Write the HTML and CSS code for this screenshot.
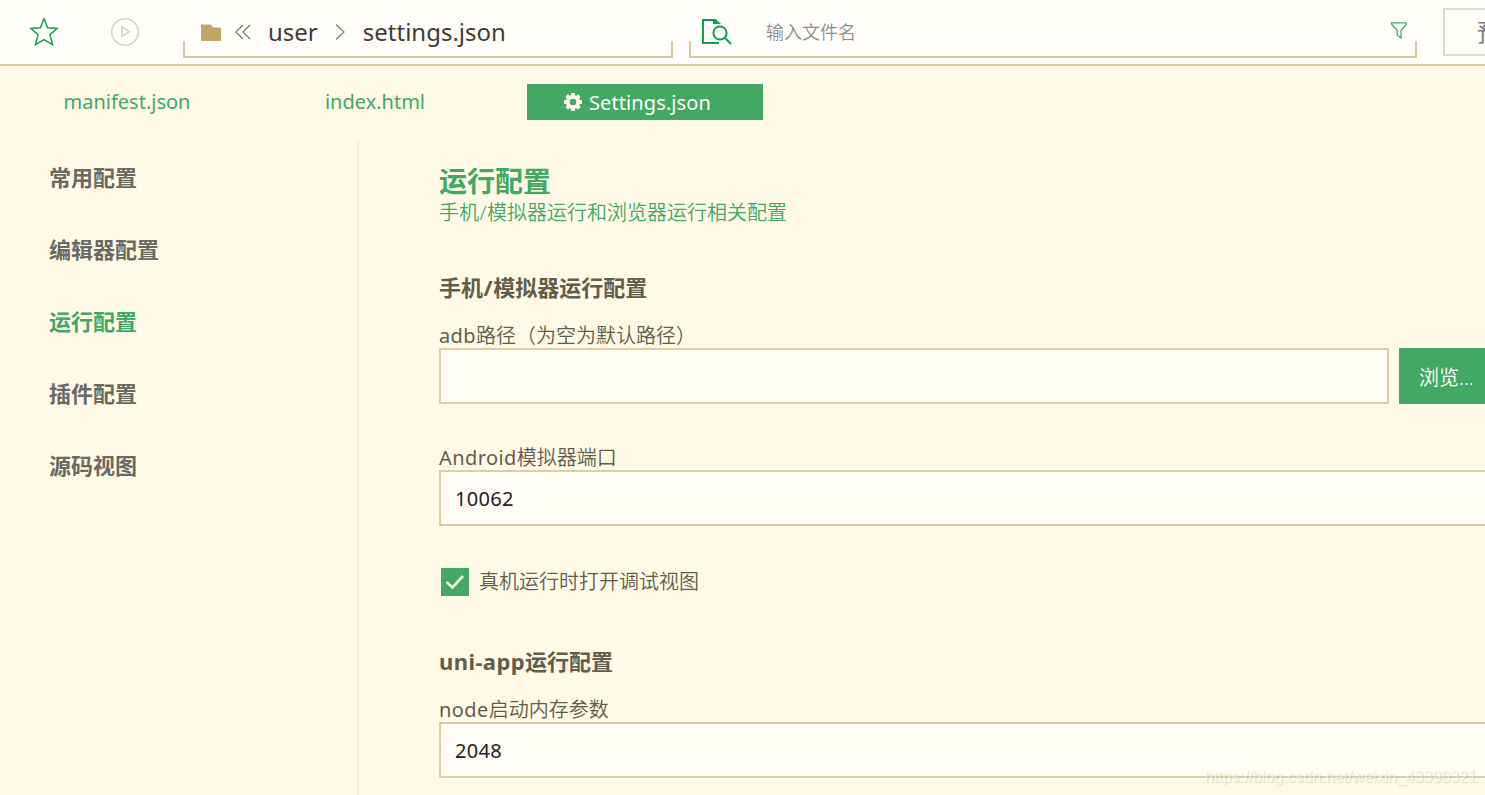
FILE: index.html
```html
<!DOCTYPE html>
<html lang="zh-CN">
<head>
    <meta charset="UTF-8">
    <meta name="viewport" content="width=device-width, initial-scale=1.0">
    <title>Settings.json</title>
    <link rel="stylesheet" href="styles.css">
</head>
<body>
    <div class="toolbar">
        <svg class="icon-star" width="30" height="30" viewBox="0 0 30 30">
            <path d="M15 1.8 L18.6 10.8 L28.2 11.4 L21 17.8 L23.5 27.6 L15 22.6 L6.5 27.6 L9 17.8 L1.8 11.4 L11.4 10.8 Z"/>
        </svg>
        <svg class="icon-play" width="28" height="28" viewBox="0 0 28 28">
            <circle cx="14" cy="14" r="13.2"/>
            <path d="M10.8 9 V18.4 L18.6 13.7 Z"/>
        </svg>
        <div class="bar path-bar">
            <svg class="icon-folder" width="20" height="17" viewBox="0 0 20 17">
                <path d="M0 0.5 H9.5 L12.5 3.5 H20 V17 H0 Z"/>
            </svg>
            <svg class="icon-back" width="16" height="16" viewBox="0 0 16 16">
                <path d="M8 1 L1 8 L8 15 M15 1 L8 8 L15 15"/>
            </svg>
            <span class="crumb">user</span>
            <svg class="icon-next" width="10" height="16" viewBox="0 0 10 16">
                <path d="M1 0.5 L9 8 L1 15.5"/>
            </svg>
            <span class="crumb">settings.json</span>
        </div>
        <div class="bar search-bar">
            <svg class="icon-search" width="30" height="27" viewBox="0 0 30 27">
                <path d="M17 25 H1 V2 H13"/>
                <path class="fold" d="M11 1 H13.5 L19 6 H11 Z"/>
                <circle cx="18" cy="15" r="6.6"/>
                <path d="M22.6 19.6 L29 26"/>
            </svg>
            <input type="text" class="search-input" placeholder="输入文件名">
            <svg class="icon-filter" width="16" height="17" viewBox="0 0 16 17">
                <path d="M0.7 0.8 H15.3 V2.3 L10 8.5 V16 L6.3 13.2 V8.5 L0.7 2.3 Z"/>
            </svg>
        </div>
        <button class="preview-btn">预览</button>
    </div>

    <div class="tabs">
        <div class="tab">manifest.json</div>
        <div class="tab">index.html</div>
        <div class="tab active">
            <svg width="18" height="18" viewBox="0 0 18 18">
                <circle cx="9" cy="9" r="5.2"/>
                <path d="M9 0 V3.6 M9 14.4 V18 M0 9 H3.6 M14.4 9 H18 M2.64 2.64 L5.2 5.2 M12.8 12.8 L15.36 15.36 M2.64 15.36 L5.2 12.8 M12.8 5.2 L15.36 2.64"/>
            </svg>
            <span>Settings.json</span>
        </div>
    </div>

    <div class="main">
        <div class="sidebar">
            <div class="menu-item">常用配置</div>
            <div class="menu-item">编辑器配置</div>
            <div class="menu-item active">运行配置</div>
            <div class="menu-item">插件配置</div>
            <div class="menu-item">源码视图</div>
        </div>

        <div class="content">
            <h1>运行配置</h1>
            <p class="desc">手机<span class="slash">/</span>模拟器运行和浏览器运行相关配置</p>

            <h2>手机<span class="slash">/</span>模拟器运行配置</h2>
            <div class="form-group">
                <label for="adbPath"><span class="latin">adb</span>路径（为空为默认路径）</label>
                <div class="input-row">
                    <input type="text" id="adbPath">
                    <button class="browse-btn">浏览...</button>
                </div>
            </div>
            <div class="form-group">
                <label for="port"><span class="latin">Android</span>模拟器端口</label>
                <input type="text" id="port" value="10062">
            </div>
            <div class="check-row">
                <span class="checkbox">
                    <svg width="20" height="16" viewBox="0 0 20 16">
                        <path d="M1.5 8 L7.5 13.5 L18 2"/>
                    </svg>
                </span>
                <span class="check-text">真机运行时打开调试视图</span>
            </div>

            <h2 class="uni-title"><span class="latin">uni-app</span>运行配置</h2>
            <div class="form-group">
                <label for="nodeMemory"><span class="latin">node</span>启动内存参数</label>
                <input type="text" id="nodeMemory" value="2048">
            </div>
        </div>
    </div>

    <div class="watermark">https://blog.csdn.net/weixin_43390321</div>
</body>
</html>
```

FILE: styles.css
```css
* {
    box-sizing: border-box;
}
body {
    margin: 0;
    height: 795px;
    overflow: hidden;
    display: flex;
    flex-direction: column;
    position: relative;
    font-family: "Noto Sans", "Noto Sans CJK SC", sans-serif;
    font-size: 20px;
    color: #645c4a;
    background-color: #fff9e7;
}
input, button {
    font-family: inherit;
    font-size: 20px;
    outline: none;
}
svg {
    display: block;
    flex: none;
    fill: none;
}

/* toolbar */
.toolbar {
    display: flex;
    flex: none;
    height: 66px;
    padding-left: 29px;
    overflow: hidden;
    background-color: #fffefa;
    border-bottom: 2px solid #d9c89e;
}
.icon-star {
    margin-top: 17px;
    stroke: #12a153;
    stroke-width: 1.5;
}
.icon-play {
    margin: 18px 44px 0 52px;
    stroke: #d2d2d2;
    stroke-width: 1.6;
}
.bar {
    display: flex;
    flex: none;
    align-items: center;
    height: 58px;
    padding-bottom: 4px;
    padding-top: 12px;
    border: 2px solid #d9c89e;
    border-top: none;
    border-image: linear-gradient(transparent 42px, #d9c89e 42px) 2;
    border-image-width: 0 2px 2px 2px;
}
.path-bar {
    width: 490px;
    margin-right: 16px;
    padding-left: 16px;
}
.icon-folder {
    fill: #c1a763;
}
.icon-back {
    margin: 0 17px 0 14px;
    stroke: #777;
    stroke-width: 1.2;
}
.icon-next {
    margin: 0 18px 0 17px;
    stroke: #777;
    stroke-width: 1.2;
}
.crumb {
    font-size: 24px;
    line-height: 36px;
    color: #403c37;
}
.search-bar {
    width: 728px;
    margin-right: 26px;
    padding-left: 11px;
    padding-right: 8px;
}
.icon-search {
    margin-bottom: 1px;
    stroke: #0da14e;
    stroke-width: 2;
}
.icon-search .fold {
    fill: #0da14e;
    stroke: none;
}
.search-input {
    flex: 1;
    padding: 0 0 0 34px;
    border: none;
    background: none;
    font-size: 18px;
    font-weight: 350;
}
.search-input::placeholder {
    color: #8f8e8a;
}
.icon-filter {
    margin-bottom: 4px;
    stroke: #45a968;
    stroke-width: 1.3;
}
.preview-btn {
    flex: none;
    width: 120px;
    height: 48px;
    margin-top: 8px;
    padding: 0 0 0 32px;
    border: 2px solid #dbdbdb;
    background-color: #fffdf7;
    color: #7c7979;
    font-size: 24px;
    line-height: 44px;
    text-align: left;
}

/* file tabs */
.tabs {
    display: flex;
    flex: none;
    height: 76px;
    padding: 18px 0 0 3px;
}
.tab {
    width: 248px;
    height: 36px;
    line-height: 36px;
    text-align: center;
    color: #42a863;
}
.tab.active {
    display: flex;
    align-items: center;
    gap: 7px;
    width: 236px;
    margin-left: 28px;
    padding-left: 37px;
    background-color: #42a863;
    color: #fff;
    letter-spacing: 0.1px;
}
.tab.active span {
    padding-top: 2px;
}
.tab.active svg {
    stroke: #fff8e7;
    stroke-width: 3.8;
}

/* settings page */
.main {
    display: flex;
    flex: 1;
    min-height: 0;
    overflow: hidden;
}
.sidebar {
    flex: none;
    width: 359px;
    padding-left: 49px;
    border-right: 2px solid #f3ebd2;
}
.menu-item {
    height: 72px;
    line-height: 70px;
    font-size: 22px;
    font-weight: bold;
    color: #6c6963;
}
.menu-item.active {
    color: #42a863;
}
.content {
    flex: none;
    width: 1200px;
    padding: 21px 0 0 80px;
}
h1 {
    margin: 0;
    font-size: 28px;
    line-height: 36px;
    color: #42a863;
}
.desc {
    margin: 0;
    line-height: 28px;
    font-weight: 350;
    color: #42a863;
}
.slash {
    padding: 0 0.5px;
}
.latin {
    letter-spacing: 0.4px;
}
h2 {
    margin: 44px 0 19px;
    font-size: 22px;
    line-height: 32px;
}
.uni-title {
    margin: 49px 0 19px;
}
.form-group {
    margin-bottom: 40px;
}
label {
    display: block;
    height: 26px;
    line-height: 28px;
    font-weight: 350;
}
label .latin {
    font-weight: 400;
}
.form-group input {
    display: block;
    width: 100%;
    height: 56px;
    padding: 0 14px;
    border: 2px solid #dccfa6;
    background-color: #fffdf6;
    color: #222;
    letter-spacing: 0.3px;
}
.input-row {
    display: flex;
    gap: 10px;
}
.input-row input {
    flex: none;
    width: 950px;
}
.browse-btn {
    flex: none;
    width: 160px;
    height: 56px;
    padding: 0 0 0 20px;
    border: none;
    background-color: #42a863;
    color: #fff;
    font-weight: 350;
    text-align: left;
}
.check-row {
    display: flex;
    align-items: center;
    gap: 10px;
    height: 28px;
    margin-top: 42px;
    padding-left: 2px;
}
.checkbox {
    display: flex;
    align-items: center;
    justify-content: center;
    width: 28px;
    height: 28px;
    background-color: #42a863;
}
.checkbox svg {
    stroke: #fff8e7;
    stroke-width: 2.6;
}
.check-text {
    line-height: 28px;
    font-weight: 350;
}

.watermark {
    position: absolute;
    right: 8px;
    bottom: 8px;
    font-family: "Liberation Sans", Arial, sans-serif;
    font-size: 16px;
    line-height: 20px;
    color: rgba(255, 255, 255, 0.6);
    text-shadow: 1px 1px 1px rgba(0, 0, 0, 0.13);
}
```
